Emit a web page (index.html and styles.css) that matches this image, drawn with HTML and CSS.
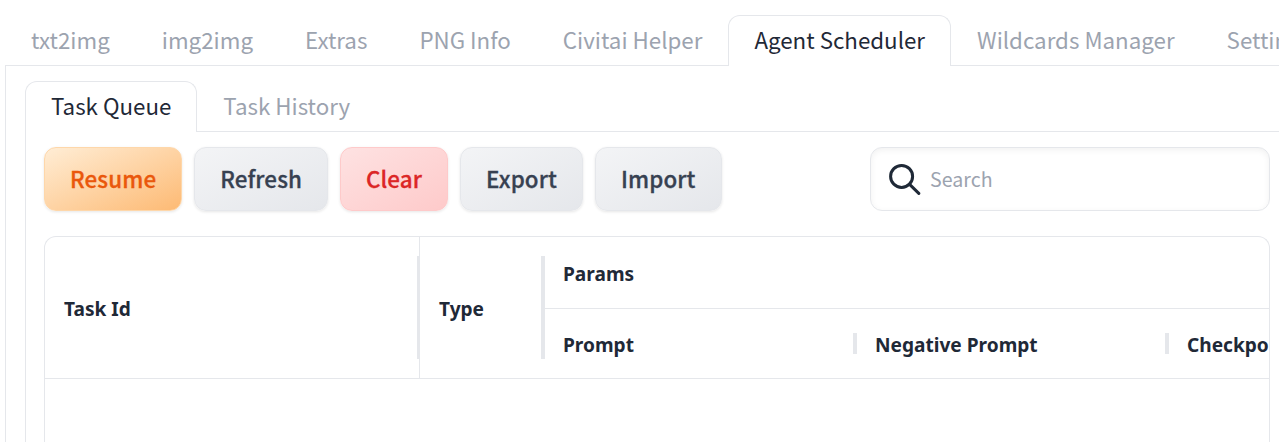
FILE: index.html
```html
<!DOCTYPE html>
<html lang="en">
<head>
    <meta charset="UTF-8">
    <meta name="viewport" content="width=device-width, initial-scale=1.0">
    <title>Agent Scheduler</title>
    <link rel="stylesheet" href="styles.css">
</head>
<body>

<nav class="tab-nav main-tabs">
    <button class="tab">txt2img</button>
    <button class="tab">img2img</button>
    <button class="tab">Extras</button>
    <button class="tab">PNG Info</button>
    <button class="tab">Civitai Helper</button>
    <button class="tab selected">Agent Scheduler</button>
    <button class="tab">Wildcards Manager</button>
    <button class="tab">Settings</button>
</nav>

<main class="tab-panel">
    <nav class="tab-nav">
        <button class="tab selected">Task Queue</button>
        <button class="tab">Task History</button>
    </nav>

    <section class="queue-panel">
        <div class="toolbar">
            <button class="btn btn-primary">Resume</button>
            <button class="btn">Refresh</button>
            <button class="btn btn-stop">Clear</button>
            <button class="btn">Export</button>
            <button class="btn">Import</button>
            <label class="search">
                <svg class="search-icon" viewBox="0 0 32 32" fill="none" stroke="#1f2937">
                    <circle cx="12.6" cy="13.4" r="11" stroke-width="3"/>
                    <path d="M20.6 21.4L29.8 30.4" stroke-width="3" stroke-linecap="round"/>
                </svg>
                <input type="text" placeholder="Search">
            </label>
        </div>

        <div class="grid">
            <div class="grid-header">
                <div class="cell cell-id">Task Id</div>
                <div class="cell cell-type">Type</div>
                <div class="group">
                    <div class="cell group-title">Params</div>
                    <div class="group-row">
                        <div class="cell cell-param">Prompt</div>
                        <div class="cell cell-param">Negative Prompt</div>
                        <div class="cell cell-param">Checkpoint</div>
                    </div>
                </div>
            </div>
        </div>
    </section>
</main>

</body>
</html>
```
FILE: styles.css
```css
* {
    box-sizing: border-box;
}
body {
    margin: 0;
    padding: 15px 0 0 5px;
    height: 442px;
    overflow: hidden;
    background: #fff;
    color: #1f2937;
    font-family: "Noto Sans CJK SC", sans-serif;
    display: flex;
    flex-direction: column;
}
button, input {
    font-family: inherit;
    margin: 0;
}

/* Tabs */
.tab-nav {
    display: flex;
    flex: none;
    height: 51px;
    border-bottom: 1px solid #e5e7eb;
}
.tab {
    flex: none;
    height: 51px;
    padding: 0 25px 5px;
    border: 1px solid transparent;
    border-bottom: none;
    border-radius: 12px 12px 0 0;
    background: transparent;
    color: #9ca3af;
    font-size: 22.33px;
    line-height: 44px;
    white-space: nowrap;
}
.tab.selected {
    background: #fff;
    border-color: #e5e7eb;
    color: #1f2937;
}
.tab-panel {
    flex: 1;
    display: flex;
    flex-direction: column;
    padding: 15px 0 0 19px;
    border-left: 1px solid #e5e7eb;
}

/* Queue */
.queue-panel {
    flex: 1;
    display: flex;
    flex-direction: column;
    gap: 25px;
    padding: 15px 9px 0 18px;
    border-left: 1px solid #e5e7eb;
}
.toolbar {
    display: flex;
    gap: 12px;
}
.btn {
    flex: none;
    height: 64px;
    padding: 0 25px 2px;
    border: 1px solid #e5e7eb;
    border-radius: 12px;
    background: linear-gradient(to bottom right, #f3f4f6, #e5e7eb);
    box-shadow: 0 1px 3px rgba(0, 0, 0, 0.1);
    color: #374151;
    font-size: 22.4px;
    font-weight: 500;
    letter-spacing: 0.11px;
    -webkit-text-stroke: 0.3px currentColor;
}
.btn-primary {
    border-color: #fed7aa;
    background: linear-gradient(to bottom right, #ffedd5, #fdba74);
    color: #ea580c;
}
.btn-stop {
    border-color: #fecaca;
    background: linear-gradient(to bottom right, #fee2e2, #fecaca);
    color: #dc2626;
}
.search {
    display: flex;
    align-items: center;
    gap: 9px;
    width: 400px;
    height: 64px;
    margin-left: auto;
    padding: 0 18px;
    border: 1px solid #e5e7eb;
    border-radius: 12px;
    box-shadow: inset 0 2px 6px rgba(0, 0, 0, 0.06);
}
.search-icon {
    flex: none;
    width: 32px;
    height: 32px;
}
.search input {
    flex: 1;
    min-width: 0;
    padding: 0 0 2px;
    border: none;
    outline: none;
    background: transparent;
    font-size: 19.6px;
}
.search input::placeholder {
    color: #9ca3af;
}

/* Table */
.grid {
    flex: 1;
    overflow: hidden;
    border: 1px solid #e5e7eb;
    border-bottom: none;
    border-radius: 12px 12px 0 0;
    font-family: "Noto Sans", sans-serif;
    font-size: 19.1px;
    font-weight: 700;
}
.grid-header {
    display: flex;
    width: 1500px;
    height: 142px;
    border-bottom: 1px solid #e5e7eb;
}
.cell {
    position: relative;
    display: flex;
    align-items: center;
    flex: none;
    padding: 2px 19px 0;
    white-space: nowrap;
}
.cell-id {
    width: 375px;
    border-right: 1px solid #e5e7eb;
}
.cell-type {
    width: 124px;
}
/* resize handles */
.cell-id::after,
.cell-type::after,
.cell-param::after {
    content: "";
    position: absolute;
    right: -1px;
    top: 19px;
    width: 4px;
    height: 103px;
    background: #e5e7eb;
}
.cell-id::after {
    right: -1px;
    width: 3px;
}
.group {
    width: 1000px;
}
.group-title {
    height: 72px;
    border-bottom: 1px solid #e5e7eb;
}
.group-row {
    display: flex;
    height: 69px;
}
.cell-param {
    width: 312px;
    padding-top: 3px;
}
.cell-param::after {
    top: 24px;
    height: 21px;
}
```
